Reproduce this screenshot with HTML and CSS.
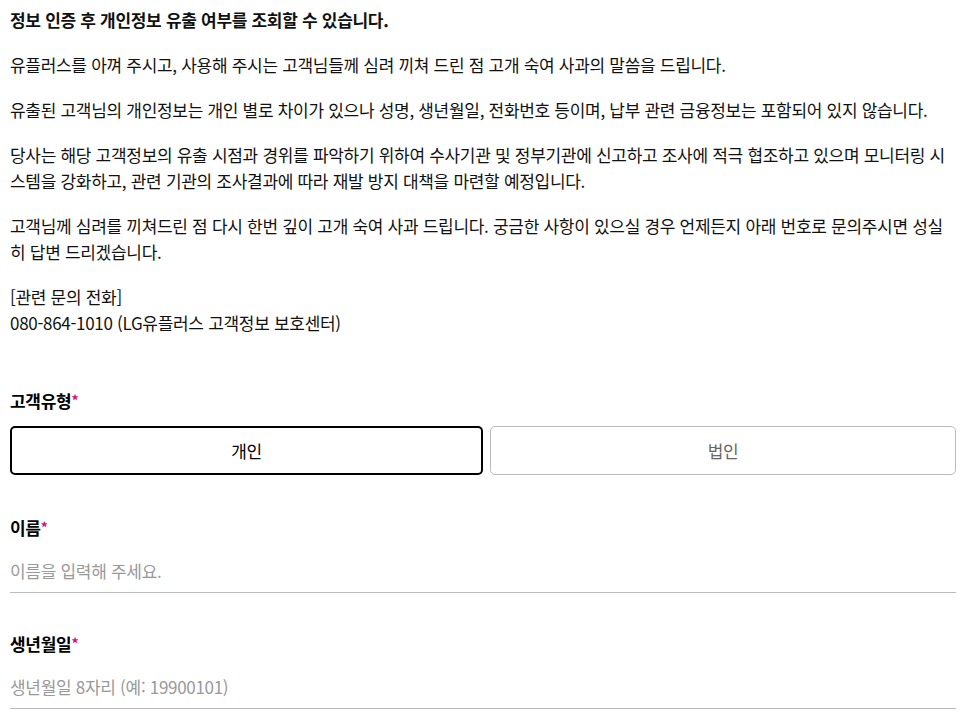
FILE: index.html
```html
<!DOCTYPE html>
<html lang="ko">
<head>
  <meta charset="UTF-8">
  <meta name="viewport" content="width=device-width, initial-scale=1.0">
  <title>개인정보 유출 조회</title>
  <link rel="stylesheet" href="styles.css">
</head>
<body>

  <div class="notice">
    <p class="lead">정보 인증 후 개인정보 유출 여부를 조회할 수 있습니다.</p>
    <p>유플러스를 아껴 주시고, 사용해 주시는 고객님들께 심려 끼쳐 드린 점 고개 숙여 사과의 말씀을 드립니다.</p>
    <p>유출된 고객님의 개인정보는 개인 별로 차이가 있으나 성명, 생년월일, 전화번호 등이며, 납부 관련 금융정보는 포함되어 있지 않습니다.</p>
    <p>당사는 해당 고객정보의 유출 시점과 경위를 파악하기 위하여 수사기관 및 정부기관에 신고하고 조사에 적극 협조하고 있으며 모니터링 시스템을 강화하고, 관련 기관의 조사결과에 따라 재발 방지 대책을 마련할 예정입니다.</p>
    <p>고객님께 심려를 끼쳐드린 점 다시 한번 깊이 고개 숙여 사과 드립니다. 궁금한 사항이 있으실 경우 언제든지 아래 번호로 문의주시면 성실히 답변 드리겠습니다.</p>
    <p>[관련 문의 전화]<br>080-864-1010 (LG유플러스 고객정보 보호센터)</p>
  </div>

  <form class="check-form">
    <div class="field field-type">
      <div class="label">고객유형<span class="req">*</span></div>
      <div class="type-tabs">
        <button type="button" class="tab active">개인</button>
        <button type="button" class="tab">법인</button>
      </div>
    </div>

    <div class="field">
      <label class="label" for="name">이름<span class="req">*</span></label>
      <input type="text" id="name" class="line-input" placeholder="이름을 입력해 주세요.">
    </div>

    <div class="field">
      <label class="label" for="birth">생년월일<span class="req">*</span></label>
      <input type="text" id="birth" class="line-input" placeholder="생년월일 8자리 (예: 19900101)">
    </div>
  </form>

</body>
</html>
```

FILE: styles.css
```css
body {
  margin: 0;
  padding: 7px 11px 0 10px;
  font-family: "Noto Sans CJK KR", "Noto Sans", sans-serif;
  font-size: 17px;
  letter-spacing: -0.3px;
  color: #111;
  background: #fff;
}
.notice p {
  margin: 0 0 19px;
  line-height: 26px;
}
.notice p:last-child {
  margin-bottom: 0;
}
.notice .lead {
  font-weight: 700;
}
.check-form {
  margin-top: 52px;
}
.field + .field {
  margin-top: 38px;
}
.field-type + .field {
  margin-top: 40px;
}
.label {
  display: block;
  font-weight: 700;
  line-height: 24px;
  color: #000;
}
.req {
  color: #e6007e;
  font-size: 14px;
  vertical-align: 2px;
}
.type-tabs {
  display: grid;
  grid-template-columns: 473fr 466fr;
  gap: 7px;
  margin-top: 13px;
}
.tab {
  height: 49px;
  box-sizing: border-box;
  border: 1px solid #bbb;
  border-radius: 5px;
  background: #fff;
  font-family: inherit;
  font-size: 17px;
  letter-spacing: -0.3px;
  color: #666;
  cursor: pointer;
}
.tab.active {
  border: 2px solid #000;
  color: #000;
}
.line-input {
  display: block;
  width: 100%;
  height: 45px;
  box-sizing: border-box;
  margin-top: 8px;
  padding: 0;
  border: 0;
  border-bottom: 1px solid #bbb;
  font-family: inherit;
  font-size: 17px;
  letter-spacing: -0.3px;
  color: #000;
  outline: none;
}
.line-input::placeholder {
  color: #999;
}
```
